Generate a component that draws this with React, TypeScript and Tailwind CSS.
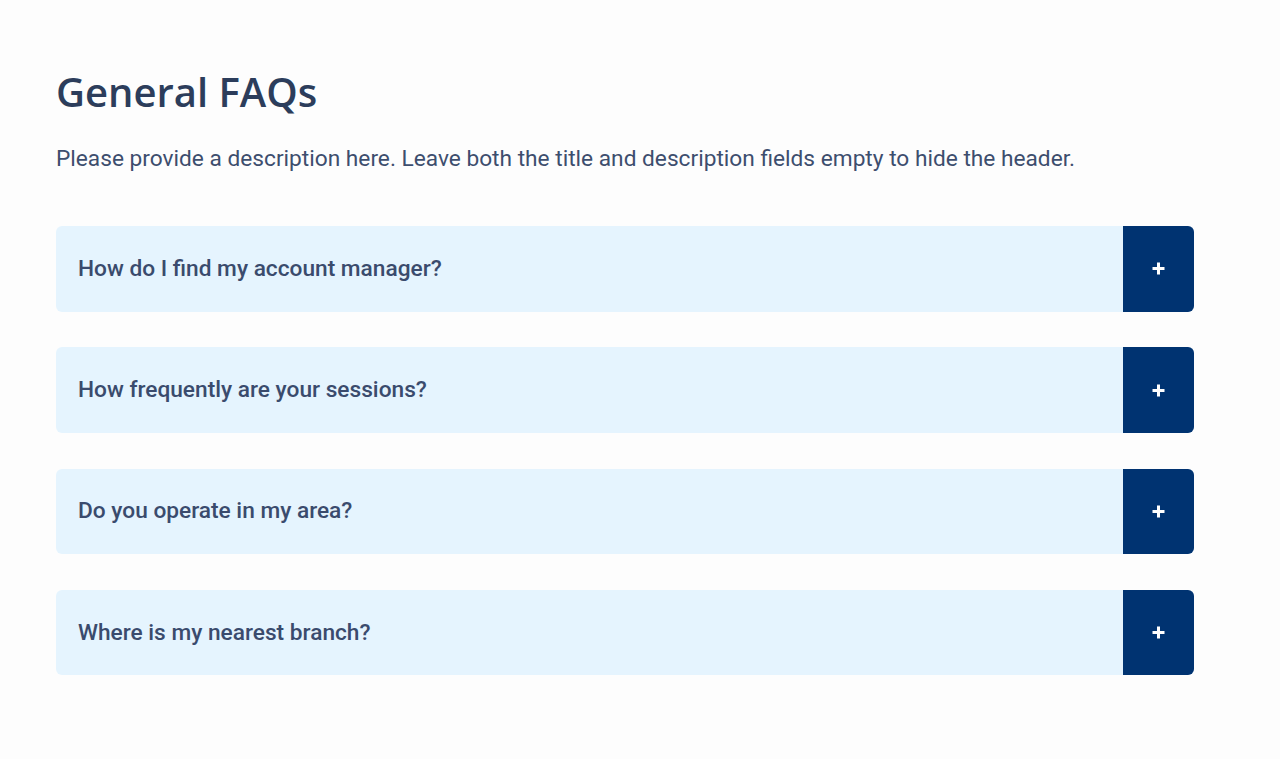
import { useState } from 'react'

const FAQS = [
  { q: 'How do I find my account manager?', a: 'Please provide an answer here.' },
  { q: 'How frequently are your sessions?', a: 'Please provide an answer here.' },
  { q: 'Do you operate in my area?', a: 'Please provide an answer here.' },
  { q: 'Where is my nearest branch?', a: 'Please provide an answer here.' },
]

function FaqItem({ q, a }: { q: string; a: string }) {
  const [open, setOpen] = useState(false)
  return (
    <div className="rounded-md bg-[#e5f4fe] overflow-hidden">
      <button onClick={() => setOpen(o => !o)} className="w-full flex items-stretch text-left h-[85.5px]">
        <span className="flex-1 flex items-center pl-[22px] text-[22.7px] font-medium text-[#3a4b6d]">{q}</span>
        <span className="w-[71px] flex items-center justify-center bg-[#003371] text-white">
          <svg width="15" height="15" viewBox="0 0 15 15" fill="none">
            <path d="M7.5 1.5v12M1.5 7.5h12" stroke="currentColor" strokeWidth="3" />
          </svg>
        </span>
      </button>
      {open && <div className="px-[22px] pb-6 text-[20px] text-[#3a4b6d]">{a}</div>}
    </div>
  )
}

export default function App() {
  return (
    <div className="min-h-screen bg-[#fdfdfd] font-['Roboto',sans-serif]">
      <div className="pl-[56px] pr-[86px] pt-[66px]">
        <h1 className="font-['Open_Sans',sans-serif] text-[40px] font-semibold leading-[52px] text-[#2c3d5b]">General FAQs</h1>
        <p className="mt-[26px] text-[22.7px] leading-[30px] text-[#3d4e6e]">
          Please provide a description here. Leave both the title and description fields empty to hide the header.
        </p>
        <div className="mt-[52px] flex flex-col gap-[35.8px]">
          {FAQS.map(f => <FaqItem key={f.q} q={f.q} a={f.a} />)}
        </div>
      </div>
    </div>
  )
}
